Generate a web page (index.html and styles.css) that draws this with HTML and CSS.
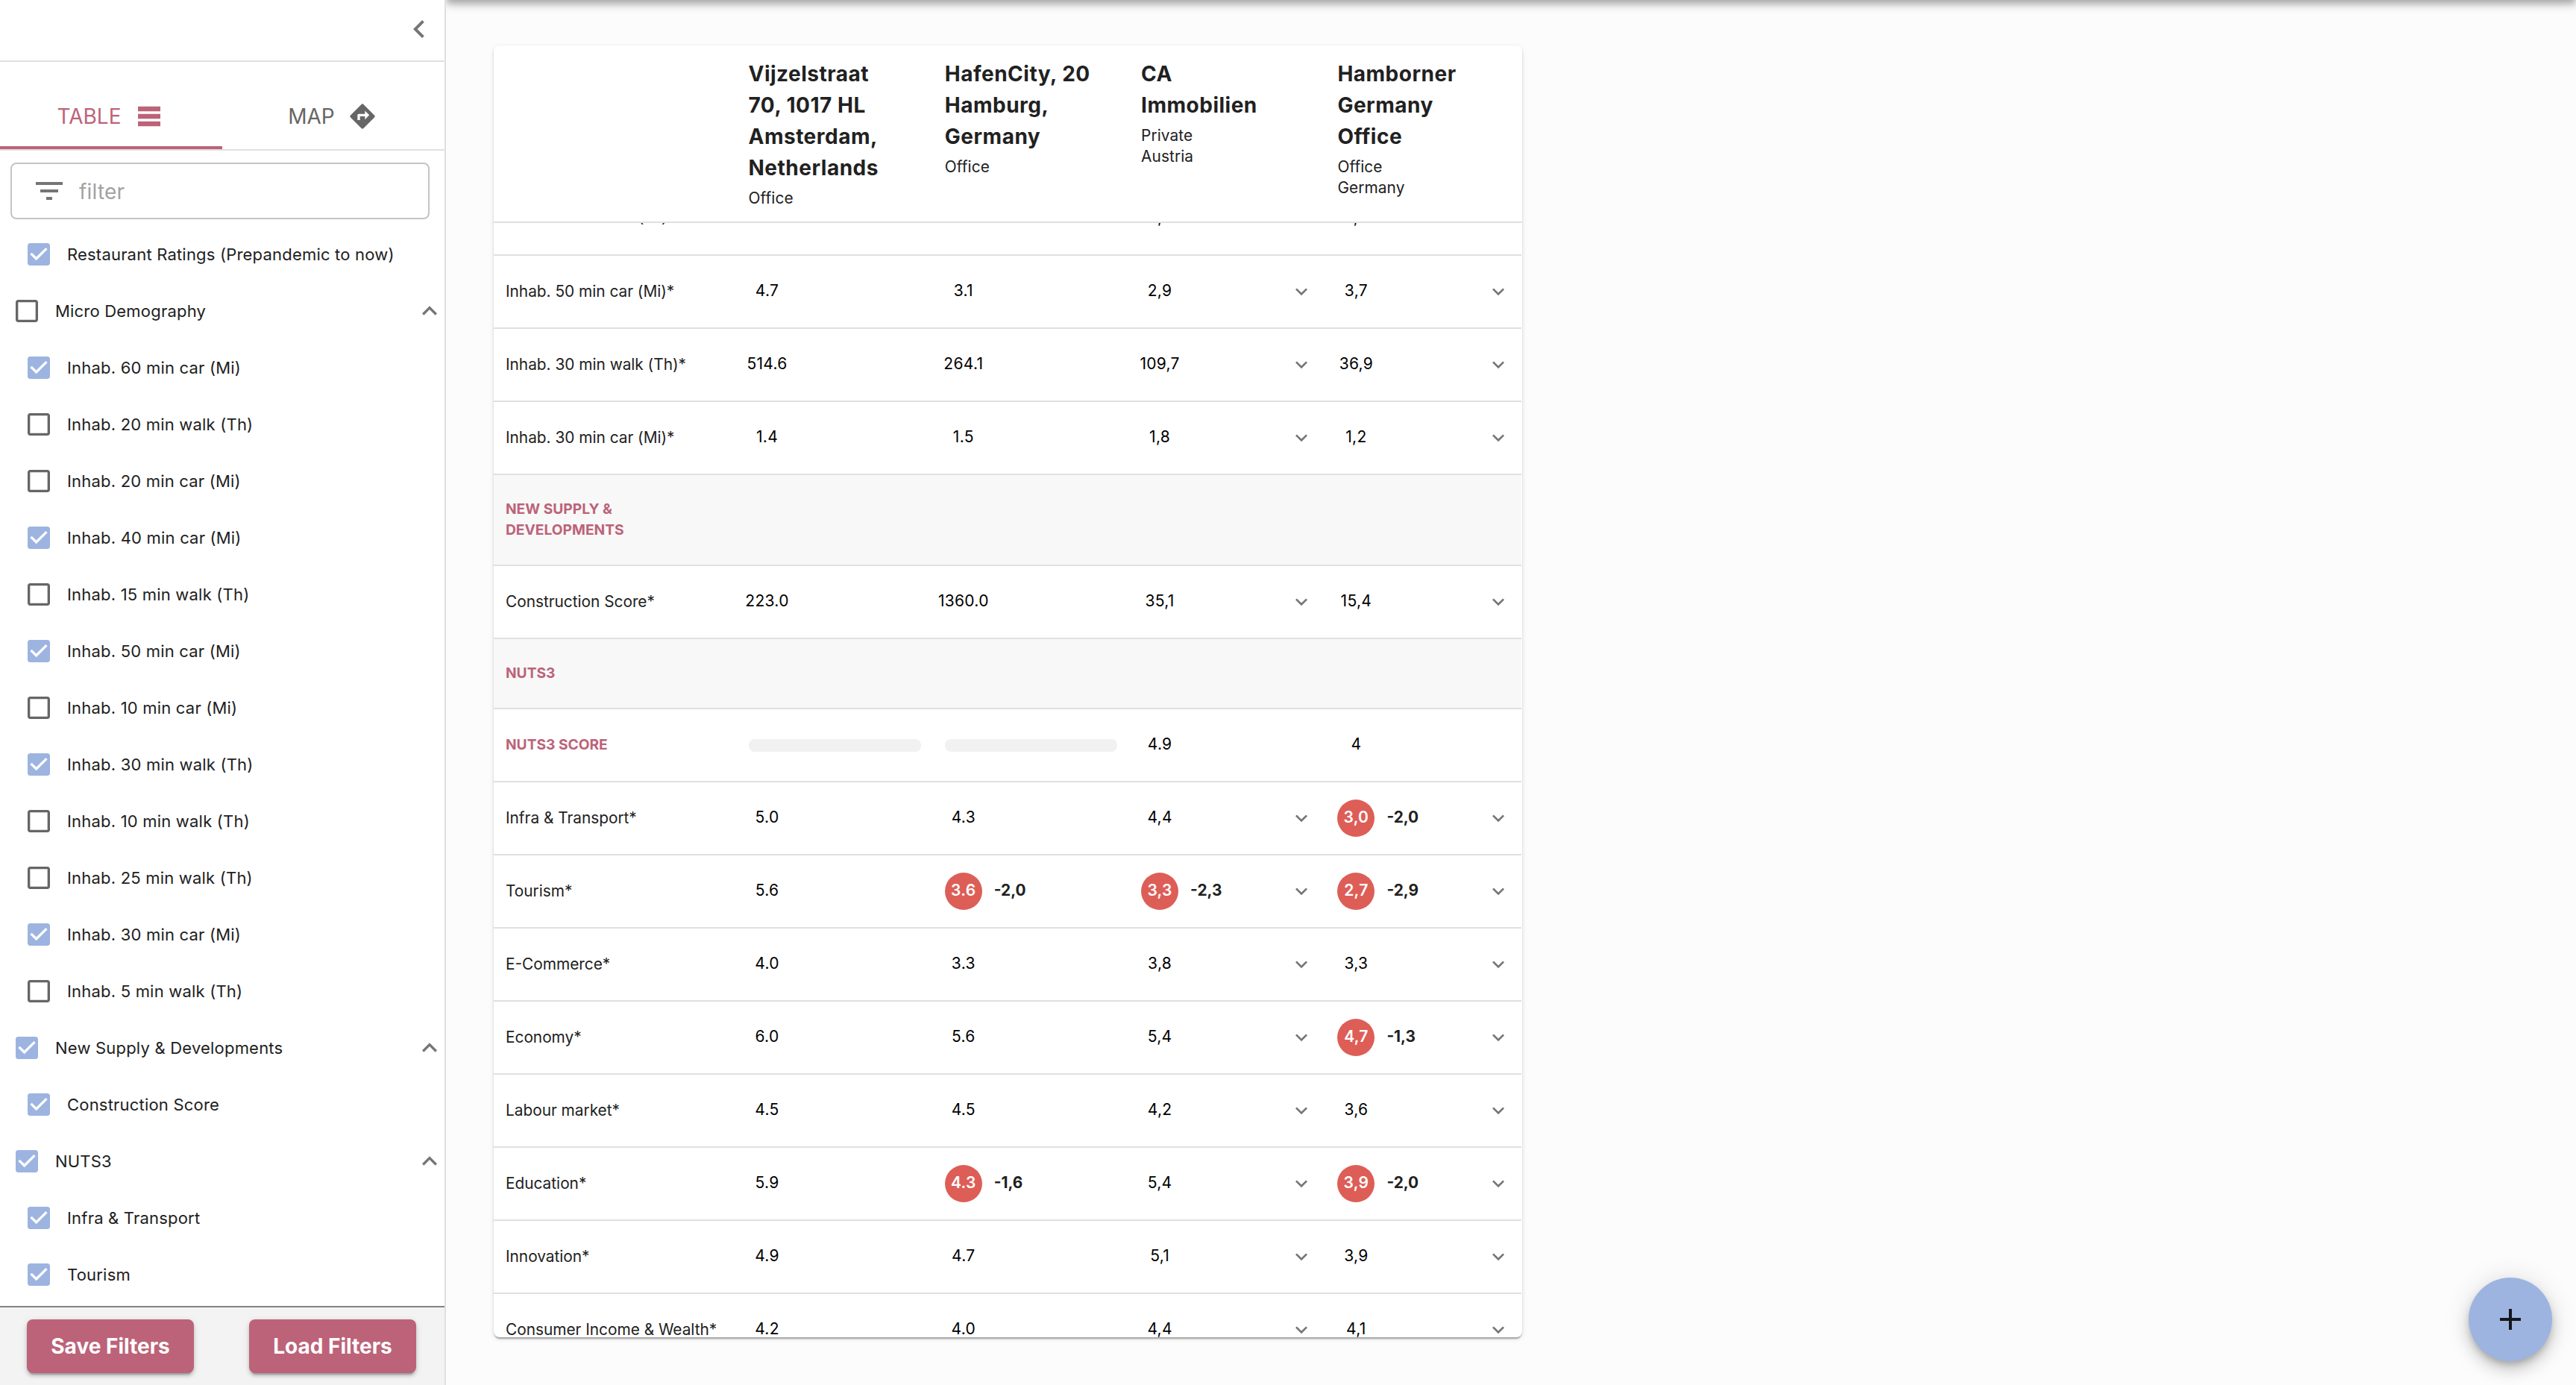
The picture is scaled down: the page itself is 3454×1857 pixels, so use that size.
FILE: index.html
```
<!DOCTYPE html>
<html lang="en">
<head>
<meta charset="UTF-8">
<meta name="viewport" content="width=device-width, initial-scale=1.0">
<title>Location comparison</title>
<link rel="stylesheet" href="styles.css">
</head>
<body>
<!-- icon sprite -->
<svg class="sprite">
    <symbol id="i-left" viewBox="0 0 24 24"><path d="M15.41 7.41L14 6l-6 6 6 6 1.41-1.41L10.83 12z"/></symbol>
    <symbol id="i-less" viewBox="0 0 24 24"><path d="M12 8l-6 6 1.41 1.41L12 10.83l4.59 4.58L18 14z"/></symbol>
    <symbol id="i-more" viewBox="0 0 24 24"><path d="M16.59 8.59L12 13.17 7.41 8.59 6 10l6 6 6-6z"/></symbol>
    <symbol id="i-rows" viewBox="0 0 24 24"><path d="M21 8H3V4h18v4zm0 2H3v4h18v-4zm0 6H3v4h18v-4z"/></symbol>
    <symbol id="i-map" viewBox="0 0 24 24"><path d="M21.71 11.29l-9-9c-.39-.39-1.02-.39-1.41 0l-9 9c-.39.39-.39 1.02 0 1.41l9 9c.39.39 1.02.39 1.41 0l9-9c.39-.38.39-1.01 0-1.41zM14 14.5V12h-4v3H8v-4c0-.55.45-1 1-1h5V7.5l3.5 3.5-3.5 3.5z"/></symbol>
    <symbol id="i-filter" viewBox="0 0 24 24"><path d="M10 18h4v-2h-4v2zM3 6v2h18V6H3zm3 7h12v-2H6v2z"/></symbol>
    <symbol id="i-on" viewBox="0 0 24 24"><path d="M19 3H5c-1.11 0-2 .9-2 2v14c0 1.1.89 2 2 2h14c1.11 0 2-.9 2-2V5c0-1.1-.89-2-2-2zm-9 14l-5-5 1.41-1.41L10 14.17l7.59-7.59L19 8l-9 9z"/></symbol>
    <symbol id="i-off" viewBox="0 0 24 24"><path d="M19 5v14H5V5h14m0-2H5c-1.1 0-2 .9-2 2v14c0 1.1.9 2 2 2h14c1.1 0 2-.9 2-2V5c0-1.1-.9-2-2-2z"/></symbol>
    <symbol id="i-add" viewBox="0 0 24 24"><path d="M19 13h-6v6h-2v-6H5v-2h6V5h2v6h6v2z"/></symbol>
</svg>

<div class="layout">
    <!-- Sidebar -->
    <aside class="sidebar">
        <div class="sidebar-head"><svg class="icon"><use href="#i-left"/></svg></div>
        <div class="tabs">
            <div class="tab active">TABLE<svg><use href="#i-rows"/></svg></div>
            <div class="tab">MAP<svg><use href="#i-map"/></svg></div>
        </div>
        <div class="search">
            <svg class="icon"><use href="#i-filter"/></svg>
            <span>filter</span>
        </div>
        <ul class="filters">
            <li class="sub on"><svg><use href="#i-on"/></svg><span>Restaurant Ratings (Prepandemic to now)</span></li>
            <li><svg><use href="#i-off"/></svg><span>Micro Demography</span><svg class="fold"><use href="#i-less"/></svg></li>
            <li class="sub on"><svg><use href="#i-on"/></svg><span>Inhab. 60 min car (Mi)</span></li>
            <li class="sub"><svg><use href="#i-off"/></svg><span>Inhab. 20 min walk (Th)</span></li>
            <li class="sub"><svg><use href="#i-off"/></svg><span>Inhab. 20 min car (Mi)</span></li>
            <li class="sub on"><svg><use href="#i-on"/></svg><span>Inhab. 40 min car (Mi)</span></li>
            <li class="sub"><svg><use href="#i-off"/></svg><span>Inhab. 15 min walk (Th)</span></li>
            <li class="sub on"><svg><use href="#i-on"/></svg><span>Inhab. 50 min car (Mi)</span></li>
            <li class="sub"><svg><use href="#i-off"/></svg><span>Inhab. 10 min car (Mi)</span></li>
            <li class="sub on"><svg><use href="#i-on"/></svg><span>Inhab. 30 min walk (Th)</span></li>
            <li class="sub"><svg><use href="#i-off"/></svg><span>Inhab. 10 min walk (Th)</span></li>
            <li class="sub"><svg><use href="#i-off"/></svg><span>Inhab. 25 min walk (Th)</span></li>
            <li class="sub on"><svg><use href="#i-on"/></svg><span>Inhab. 30 min car (Mi)</span></li>
            <li class="sub"><svg><use href="#i-off"/></svg><span>Inhab. 5 min walk (Th)</span></li>
            <li class="on"><svg><use href="#i-on"/></svg><span>New Supply &amp; Developments</span><svg class="fold"><use href="#i-less"/></svg></li>
            <li class="sub on"><svg><use href="#i-on"/></svg><span>Construction Score</span></li>
            <li class="on"><svg><use href="#i-on"/></svg><span>NUTS3</span><svg class="fold"><use href="#i-less"/></svg></li>
            <li class="sub on"><svg><use href="#i-on"/></svg><span>Infra &amp; Transport</span></li>
            <li class="sub on"><svg><use href="#i-on"/></svg><span>Tourism</span></li>
        </ul>
        <div class="actions">
            <button>Save Filters</button>
            <button>Load Filters</button>
        </div>
    </aside>

    <!-- Main -->
    <main class="main">
        <div class="appbar"></div>
        <section class="card">
            <div class="head">
                <div></div>
                <div><h2>Vijzelstraat<br>70, 1017 HL<br>Amsterdam,<br>Netherlands</h2><p>Office</p></div>
                <div><h2>HafenCity, 20<br>Hamburg,<br>Germany</h2><p>Office</p></div>
                <div><h2>CA<br>Immobilien</h2><p>Private<br>Austria</p></div>
                <div><h2>Hamborner<br>Germany<br>Office</h2><p>Office<br>Germany</p></div>
            </div>
            <div class="rows">
                <div class="row first">
                    <div class="name">Inhab. 40 min car (Mi)*</div>
                    <div class="cell"><b>3.3</b></div>
                    <div class="cell"><b>2.4</b></div>
                    <div class="cell"><b>2,3</b><svg><use href="#i-more"/></svg></div>
                    <div class="cell"><b>2,4</b><svg><use href="#i-more"/></svg></div>
                </div>
                <div class="row">
                    <div class="name">Inhab. 50 min car (Mi)*</div>
                    <div class="cell"><b>4.7</b></div>
                    <div class="cell"><b>3.1</b></div>
                    <div class="cell"><b>2,9</b><svg><use href="#i-more"/></svg></div>
                    <div class="cell"><b>3,7</b><svg><use href="#i-more"/></svg></div>
                </div>
                <div class="row">
                    <div class="name">Inhab. 30 min walk (Th)*</div>
                    <div class="cell"><b>514.6</b></div>
                    <div class="cell"><b>264.1</b></div>
                    <div class="cell"><b>109,7</b><svg><use href="#i-more"/></svg></div>
                    <div class="cell"><b>36,9</b><svg><use href="#i-more"/></svg></div>
                </div>
                <div class="row">
                    <div class="name">Inhab. 30 min car (Mi)*</div>
                    <div class="cell"><b>1.4</b></div>
                    <div class="cell"><b>1.5</b></div>
                    <div class="cell"><b>1,8</b><svg><use href="#i-more"/></svg></div>
                    <div class="cell"><b>1,2</b><svg><use href="#i-more"/></svg></div>
                </div>
                <div class="row group"><div class="name title">NEW SUPPLY &amp;<br>DEVELOPMENTS</div></div>
                <div class="row">
                    <div class="name">Construction Score*</div>
                    <div class="cell"><b>223.0</b></div>
                    <div class="cell"><b>1360.0</b></div>
                    <div class="cell"><b>35,1</b><svg><use href="#i-more"/></svg></div>
                    <div class="cell"><b>15,4</b><svg><use href="#i-more"/></svg></div>
                </div>
                <div class="row group"><div class="name title">NUTS3</div></div>
                <div class="row">
                    <div class="name title">NUTS3 SCORE</div>
                    <div class="cell"><div class="skeleton"></div></div>
                    <div class="cell"><div class="skeleton"></div></div>
                    <div class="cell"><b>4.9</b></div>
                    <div class="cell"><b>4</b></div>
                </div>
                <div class="row">
                    <div class="name">Infra &amp; Transport*</div>
                    <div class="cell"><b>5.0</b></div>
                    <div class="cell"><b>4.3</b></div>
                    <div class="cell"><b>4,4</b><svg><use href="#i-more"/></svg></div>
                    <div class="cell"><b class="bad">3,0</b><em>-2,0</em><svg><use href="#i-more"/></svg></div>
                </div>
                <div class="row">
                    <div class="name">Tourism*</div>
                    <div class="cell"><b>5.6</b></div>
                    <div class="cell"><b class="bad">3.6</b><em>-2,0</em></div>
                    <div class="cell"><b class="bad">3,3</b><em>-2,3</em><svg><use href="#i-more"/></svg></div>
                    <div class="cell"><b class="bad">2,7</b><em>-2,9</em><svg><use href="#i-more"/></svg></div>
                </div>
                <div class="row">
                    <div class="name">E-Commerce*</div>
                    <div class="cell"><b>4.0</b></div>
                    <div class="cell"><b>3.3</b></div>
                    <div class="cell"><b>3,8</b><svg><use href="#i-more"/></svg></div>
                    <div class="cell"><b>3,3</b><svg><use href="#i-more"/></svg></div>
                </div>
                <div class="row">
                    <div class="name">Economy*</div>
                    <div class="cell"><b>6.0</b></div>
                    <div class="cell"><b>5.6</b></div>
                    <div class="cell"><b>5,4</b><svg><use href="#i-more"/></svg></div>
                    <div class="cell"><b class="bad">4,7</b><em>-1,3</em><svg><use href="#i-more"/></svg></div>
                </div>
                <div class="row">
                    <div class="name">Labour market*</div>
                    <div class="cell"><b>4.5</b></div>
                    <div class="cell"><b>4.5</b></div>
                    <div class="cell"><b>4,2</b><svg><use href="#i-more"/></svg></div>
                    <div class="cell"><b>3,6</b><svg><use href="#i-more"/></svg></div>
                </div>
                <div class="row">
                    <div class="name">Education*</div>
                    <div class="cell"><b>5.9</b></div>
                    <div class="cell"><b class="bad">4.3</b><em>-1,6</em></div>
                    <div class="cell"><b>5,4</b><svg><use href="#i-more"/></svg></div>
                    <div class="cell"><b class="bad">3,9</b><em>-2,0</em><svg><use href="#i-more"/></svg></div>
                </div>
                <div class="row">
                    <div class="name">Innovation*</div>
                    <div class="cell"><b>4.9</b></div>
                    <div class="cell"><b>4.7</b></div>
                    <div class="cell"><b>5,1</b><svg><use href="#i-more"/></svg></div>
                    <div class="cell"><b>3,9</b><svg><use href="#i-more"/></svg></div>
                </div>
                <div class="row">
                    <div class="name">Consumer Income &amp; Wealth*</div>
                    <div class="cell"><b>4.2</b></div>
                    <div class="cell"><b>4.0</b></div>
                    <div class="cell"><b>4,4</b><svg><use href="#i-more"/></svg></div>
                    <div class="cell"><b>4,1</b><svg><use href="#i-more"/></svg></div>
                </div>
            </div>
        </section>
        <button class="fab"><svg class="icon"><use href="#i-add"/></svg></button>
    </main>
</div>
</body>
</html>
```
FILE: styles.css
```
* {box-sizing:border-box;}
body {margin:0;font-family:Inter,"Noto Sans",sans-serif;background:#fcfcfc;color:#212121;}
h2,p,ul {margin:0;padding:0;}
svg {fill:currentColor;flex:none;display:block;}
.sprite {display:none;}
.icon {width:48px;height:48px;}
.layout {display:flex;height:100vh;overflow:hidden;}

/* sidebar */
.sidebar {width:598px;flex:none;display:flex;flex-direction:column;background:#fff;border-right:2px solid #e0e0e0;}
.sidebar-head {height:83px;display:flex;justify-content:flex-end;align-items:center;padding:0 10px 4px 0;border-bottom:2px solid #e0e0e0;color:#757575;}
.tabs {display:flex;height:119px;border-bottom:2px solid #e0e0e0;}
.tab {flex:1;display:flex;align-items:center;justify-content:center;gap:17px;padding:32px 2px 0 0;font-size:28px;color:#666;border-bottom:4px solid transparent;}
.tab svg {width:40px;height:40px;}
.tab.active {color:#bc6379;border-bottom-color:#bc6379;}
.search {height:76px;margin:16px 20px 9px 14px;padding-left:26px;display:flex;align-items:center;gap:16px;border:2px solid #c4c4c4;border-radius:8px;color:#757575;}
.search span {padding-top:2px;font-size:28px;letter-spacing:0.2px;color:#a2a2a2;}
.filters {flex:1;list-style:none;}
.filters li {height:76px;display:flex;align-items:center;padding-left:16px;font-size:22px;letter-spacing:0.2px;color:#212121;}
.filters li.sub {padding-left:32px;}
.filters svg {width:40px;height:40px;margin-right:18px;color:#666;}
.filters li.on svg:first-child {color:#9db4e0;}
.filters svg.fold {margin:0 0 0 auto;color:#757575;}
.actions {height:106px;display:flex;justify-content:space-between;padding:16px 38px 0 36px;background:#f3f3f3;border-top:2px solid #828282;}
.actions button {width:224px;height:72px;border:none;border-radius:8px;background:#bc6379;color:#fff;font-family:inherit;font-size:28px;font-weight:700;box-shadow:0 6px 2px -4px rgba(0,0,0,0.2),0 4px 4px rgba(0,0,0,0.14),0 2px 10px rgba(0,0,0,0.12);}

/* main */
.main {flex:1;position:relative;overflow:hidden;}
.appbar {height:20px;margin-top:-20px;box-shadow:0 4px 8px -2px rgba(0,0,0,0.2),0 8px 10px rgba(0,0,0,0.14),0 2px 20px rgba(0,0,0,0.12);}
.card {width:1379px;height:1732px;margin:61px 0 0 64px;display:flex;flex-direction:column;overflow:hidden;background:#fff;border-radius:8px;box-shadow:0 4px 2px -2px rgba(0,0,0,0.2),0 2px 2px rgba(0,0,0,0.14),0 2px 6px rgba(0,0,0,0.12);}
.head {height:238px;flex:none;border-bottom:2px solid #e0e0e0;}
.head,.row {display:grid;grid-template-columns:325.5px repeat(4,263.3px);}
.head > div {padding:17px 0 0 16px;}
.head h2 {font-size:28px;line-height:42px;letter-spacing:0.5px;font-weight:700;white-space:nowrap;}
.head p {margin-top:6px;font-size:20.8px;line-height:28px;letter-spacing:0.1px;}
.rows {flex:1;overflow:hidden;width:1378px;}
.row {height:98px;border-bottom:2px solid #e0e0e0;}
.row.first {margin-top:-54px;}
.name {display:flex;align-items:center;padding:0 0 2px 16px;font-size:20.8px;white-space:nowrap;}
.first .name {padding-bottom:5px;}
.title {font-size:19.2px;line-height:28px;font-weight:700;letter-spacing:0;color:#bc6379;}
.row.group {height:94px;background:#f8f8f8;}
.row.group:has(br) {height:122px;}
.cell {display:flex;align-items:center;padding:0 16px 0 16px;}
.cell b {width:50px;height:50px;flex:none;display:flex;align-items:center;justify-content:center;padding-bottom:3px;border-radius:50%;font-size:21px;font-weight:400;letter-spacing:0.3px;color:#000;}
.cell b.bad {background:#dd5e57;color:#fff;font-weight:600;}
.cell em {margin-left:16px;padding-bottom:3px;font-style:normal;font-weight:700;font-size:20.8px;letter-spacing:0;}
.cell svg {width:32px;height:32px;margin-left:auto;color:#757575;}
.skeleton {width:232px;height:17px;border-radius:8px;background:#f1f1f1;}
.fab {position:absolute;right:32px;bottom:32px;width:112px;height:112px;display:flex;align-items:center;justify-content:center;border:none;border-radius:50%;background:#9db4e0;color:#15171c;box-shadow:0 6px 10px -2px rgba(0,0,0,0.2),0 12px 20px rgba(0,0,0,0.14),0 2px 36px rgba(0,0,0,0.12);}
```
